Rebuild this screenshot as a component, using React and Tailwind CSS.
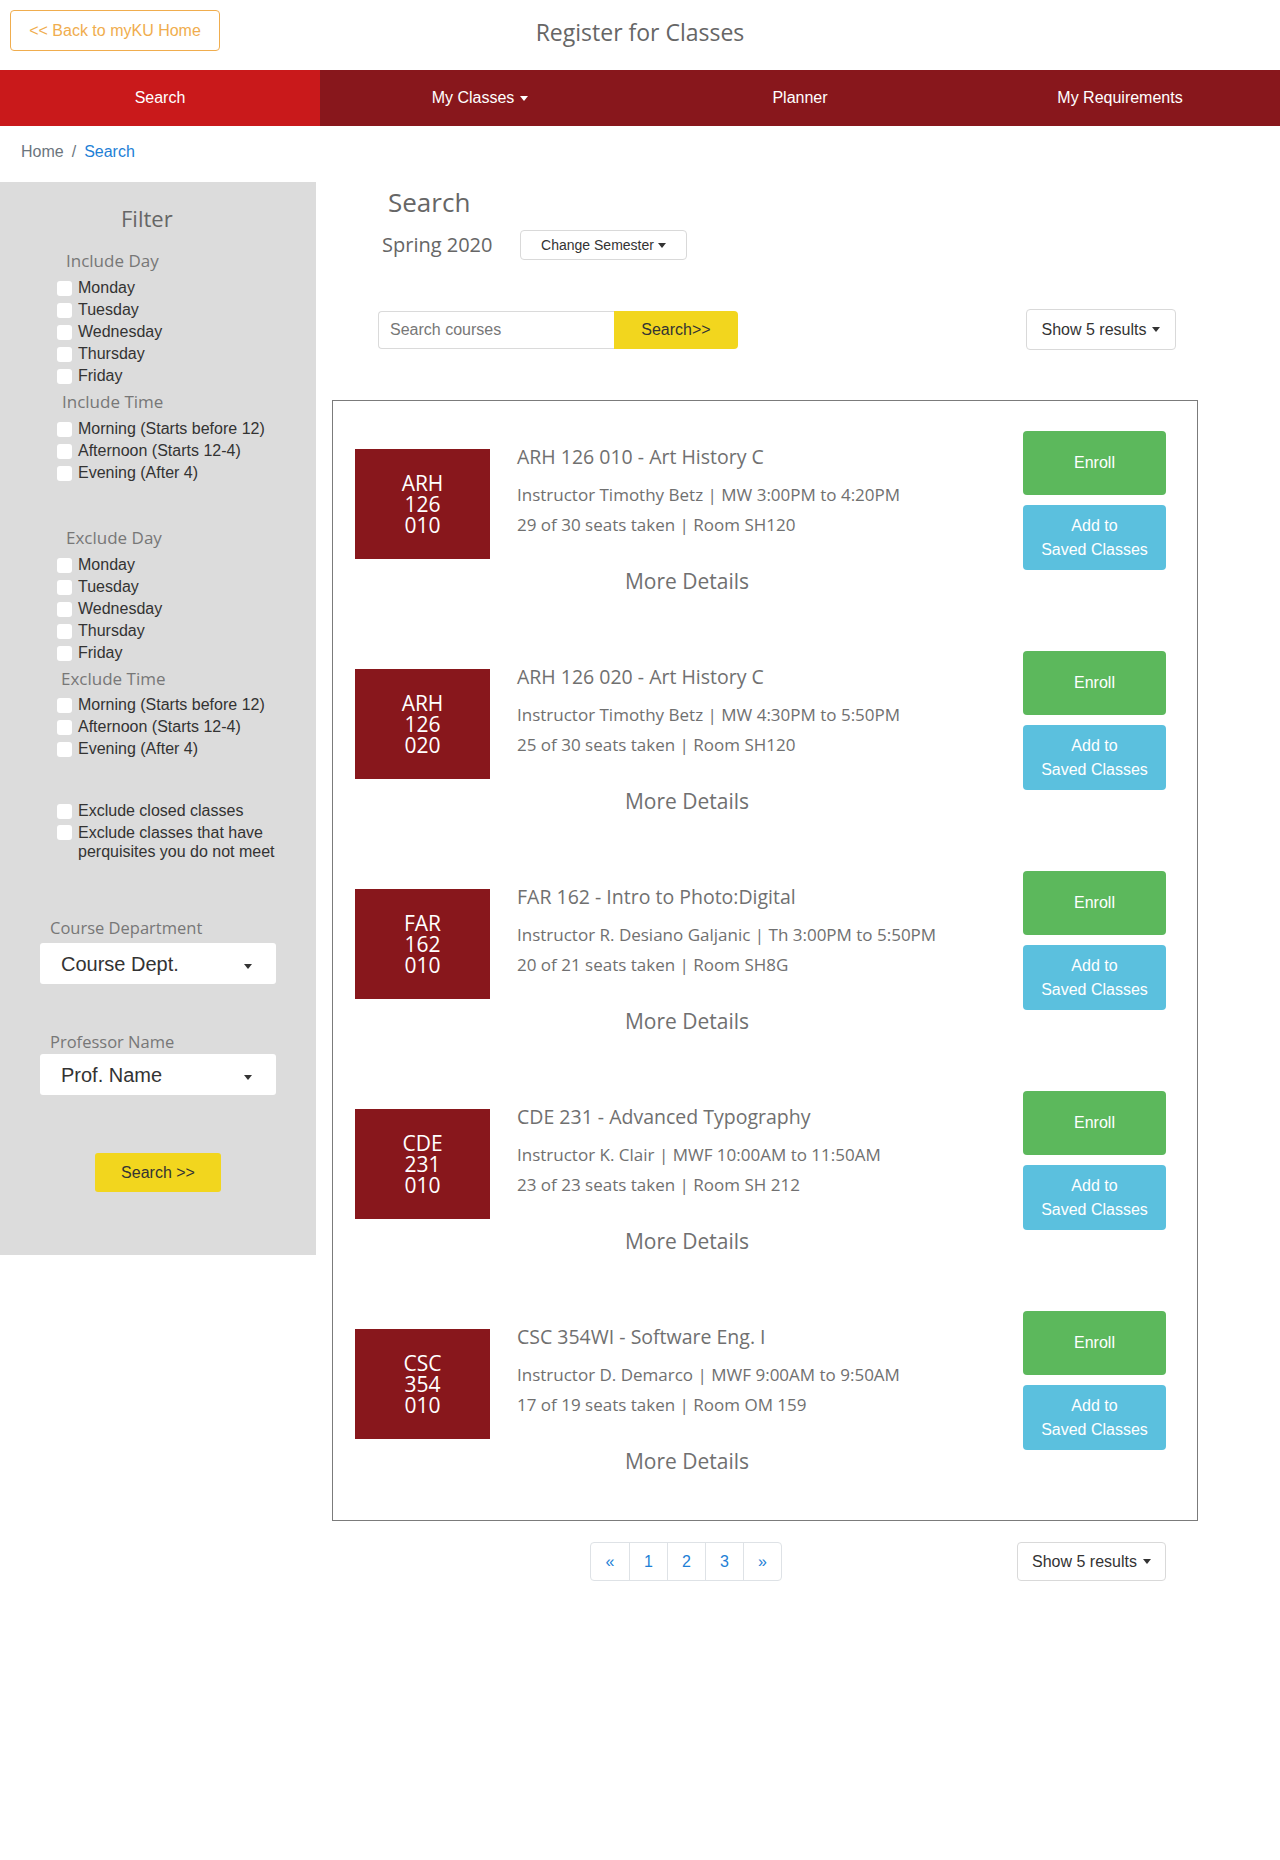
const sans = "font-['Open_Sans',sans-serif]";

const days = ["Monday", "Tuesday", "Wednesday", "Thursday", "Friday"];
const times = ["Morning (Starts before 12)", "Afternoon (Starts 12-4)", "Evening (After 4)"];

const courses = [
  { dept: "ARH", num: "126", sec: "010", title: "ARH 126 010 - Art History C", who: "Instructor Timothy Betz | MW 3:00PM to 4:20PM", seats: "29 of 30 seats taken | Room SH120" },
  { dept: "ARH", num: "126", sec: "020", title: "ARH 126 020 - Art History C", who: "Instructor Timothy Betz | MW 4:30PM to 5:50PM", seats: "25 of 30 seats taken | Room SH120" },
  { dept: "FAR", num: "162", sec: "010", title: "FAR 162 - Intro to Photo:Digital", who: "Instructor R. Desiano Galjanic | Th 3:00PM to 5:50PM", seats: "20 of 21 seats taken | Room SH8G" },
  { dept: "CDE", num: "231", sec: "010", title: "CDE 231 - Advanced Typography", who: "Instructor K. Clair | MWF 10:00AM to 11:50AM", seats: "23 of 23 seats taken | Room SH 212" },
  { dept: "CSC", num: "354", sec: "010", title: "CSC 354WI - Software Eng. I", who: "Instructor D. Demarco | MWF 9:00AM to 9:50AM", seats: "17 of 19 seats taken | Room OM 159" },
];

function Caret({ color = "border-t-white" }) {
  return <span className={`inline-block w-0 h-0 border-x-[4px] border-t-[5px] border-x-transparent ${color}`} />;
}

function Check({ label }) {
  return (
    <div className="flex items-center h-[22px] pl-[57px]">
      <span className="w-[15px] h-[15px] rounded-[3px] bg-white shrink-0" />
      <span className="ml-[6px] text-[16px] text-[#333]">{label}</span>
    </div>
  );
}

function Heading({ children, className }) {
  return <div className={`${sans} text-[17px] leading-[24px] text-[#777] ${className}`}>{children}</div>;
}

function Select({ label, className }) {
  return (
    <div className={`ml-[40px] w-[236px] h-[41px] bg-white rounded-[3px] flex items-center pl-[21px] pr-[24px] ${className}`}>
      <span className="text-[20px] text-[#333]">{label}</span>
      <span className="ml-auto"><Caret color="border-t-[#333]" /></span>
    </div>
  );
}

function Sidebar() {
  return (
    <aside className="w-[316px] shrink-0 bg-[#dcdcdc] pt-[21px] pb-[63px]">
      <div className={`${sans} ml-[121px] text-[22px] leading-[30px] text-[#666]`}>Filter</div>

      <Heading className="ml-[66px] mt-[16px]">Include Day</Heading>
      <div className="mt-[4px]">{days.map((d) => <Check key={d} label={d} />)}</div>
      <Heading className="ml-[62px] mt-[3px]">Include Time</Heading>
      <div className="mt-[4px]">{times.map((t) => <Check key={t} label={t} />)}</div>

      <Heading className="ml-[66px] mt-[42px]">Exclude Day</Heading>
      <div className="mt-[4px]">{days.map((d) => <Check key={d} label={d} />)}</div>
      <Heading className="ml-[61px] mt-[3px]">Exclude Time</Heading>
      <div className="mt-[3px]">{times.map((t) => <Check key={t} label={t} />)}</div>

      <div className="mt-[40px]">
        <Check label="Exclude closed classes" />
        <div className="flex items-start pl-[57px] mt-[1px]">
          <span className="w-[15px] h-[15px] rounded-[3px] bg-white shrink-0 mt-[2px]" />
          <span className="ml-[6px] text-[16px] leading-[19px] text-[#333]">
            Exclude classes that have
            <br />
            perquisites you do not meet
          </span>
        </div>
      </div>

      <div className={`${sans} ml-[50px] mt-[56px] text-[16.5px] leading-[22px] text-[#777]`}>Course Department</div>
      <Select label="Course Dept." className="mt-[4px]" />

      <div className={`${sans} ml-[50px] mt-[47px] text-[16.5px] leading-[22px] text-[#777]`}>Professor Name</div>
      <Select label="Prof. Name" className="mt-[1px]" />

      <button className="block mx-auto mt-[58px] w-[126px] h-[39px] bg-[#f2d61e] rounded-[3px] text-[16px] text-[#333]">
        Search &gt;&gt;
      </button>
    </aside>
  );
}

function Course({ c, first }) {
  return (
    <div className={`flex items-start h-[209px] ${first ? "" : "mt-[11px]"}`}>
      <div className={`${sans} mt-[18px] ml-[22px] w-[135px] h-[110px] bg-[#88171c] text-white text-[21px] leading-[21px] flex flex-col items-center justify-center`}>
        <span>{c.dept}</span>
        <span>{c.num}</span>
        <span>{c.sec}</span>
      </div>
      <div className={`${sans} ml-[27px] w-[340px] pt-[12px] text-[#707070]`}>
        <div className="text-[19.5px] leading-[28px] whitespace-nowrap">{c.title}</div>
        <div className="mt-[9px] text-[17px] leading-[30px] whitespace-nowrap">{c.who}</div>
        <div className="text-[17px] leading-[30px] whitespace-nowrap">{c.seats}</div>
        <div className="mt-[26px] text-center text-[21px] leading-[30px]">More Details</div>
      </div>
      <div className="ml-auto mr-[31px] w-[143px]">
        <button className="w-full h-[64px] bg-[#5cb85c] rounded-[4px] text-white text-[16px]">Enroll</button>
        <button className="w-full h-[65px] mt-[10px] bg-[#5bc0de] rounded-[4px] text-white text-[16px] leading-6">
          Add to
          <br />
          Saved Classes
        </button>
      </div>
    </div>
  );
}

function ShowResults({ className }) {
  return (
    <button className={`bg-white border border-[#d9d9d9] rounded-[4px] text-[16px] text-[#333] flex items-center justify-center gap-[6px] ${className}`}>
      Show 5 results <Caret color="border-t-[#333]" />
    </button>
  );
}

export default function App() {
  return (
    <div className="min-h-[1860px] bg-white font-['Liberation_Sans',Arial,sans-serif]">
      <header className="h-[70px] grid grid-cols-[1fr_auto_1fr] items-start">
        <div>
          <button className="ml-[10px] mt-[10px] w-[210px] h-[41px] border border-[#f0ad4e] rounded-[4px] text-[#f0ad4e] text-[16px]">
            &lt;&lt; Back to myKU Home
          </button>
        </div>
        <h1 className={`${sans} pt-[16px] text-[23px] leading-[32px] text-[#666]`}>Register for Classes</h1>
        <div />
      </header>

      <nav className="grid grid-cols-4 h-[56px] bg-[#88171c] text-white text-[16px]">
        <div className="bg-[#c9191b] flex items-center justify-center">Search</div>
        <div className="flex items-center justify-center gap-[6px]">My Classes <Caret /></div>
        <div className="flex items-center justify-center">Planner</div>
        <div className="flex items-center justify-center">My Requirements</div>
      </nav>

      <div className="h-[56px] pt-[15px] pl-[21px] text-[16px] leading-[22px]">
        <span className="text-[#6c757d]">Home</span>
        <span className="text-[#6c757d] mx-[8px]">/</span>
        <span className="text-[#1e7fd6]">Search</span>
      </div>

      <div className="flex items-start">
        <Sidebar />

        <main className="flex-1 pt-[3px]">
          <h2 className={`${sans} ml-[72px] text-[26px] leading-[34px] text-[#666]`}>Search</h2>
          <div className="mt-[11px] h-[30px] flex items-center">
            <span className={`${sans} ml-[66px] w-[138px] text-[20px] text-[#666]`}>Spring 2020</span>
            <button className="w-[167px] h-[30px] bg-white border border-[#d9d9d9] rounded-[4px] text-[14px] text-[#333] flex items-center justify-center gap-[4px]">
              Change Semester <Caret color="border-t-[#333]" />
            </button>
          </div>

          <div className="mt-[49px] h-[41px] flex items-center">
            <div className="ml-[62px] flex">
              <input
                placeholder="Search courses"
                className="w-[236px] h-[38px] border border-[#dadada] border-r-0 rounded-l-[4px] px-[11px] text-[16px] text-[#333] placeholder:text-[#777] outline-none"
              />
              <button className="w-[124px] h-[38px] bg-[#f2d61e] rounded-r-[4px] text-[16px] text-[#333]">Search&gt;&gt;</button>
            </div>
            <ShowResults className="ml-auto mr-[104px] w-[150px] h-[41px]" />
          </div>

          <section className="mt-[50px] ml-[16px] w-[866px] border border-[#7b7b7b] pt-[30px]">
            {courses.map((c, i) => (
              <Course key={c.title} c={c} first={i === 0} />
            ))}
          </section>

          <div className="mt-[21px] ml-[16px] w-[866px] flex items-center">
            <div className="ml-[258px] flex border border-[#dee2e6] rounded-[4px] text-[16px] text-[#1e7fd6]">
              {["«", "1", "2", "3", "»"].map((p, i) => (
                <span key={p} className={`w-[38px] h-[37px] flex items-center justify-center ${i > 0 ? "border-l border-[#dee2e6]" : ""}`}>
                  {p}
                </span>
              ))}
            </div>
            <ShowResults className="ml-auto mr-[32px] w-[149px] h-[39px]" />
          </div>
        </main>
      </div>
    </div>
  );
}
